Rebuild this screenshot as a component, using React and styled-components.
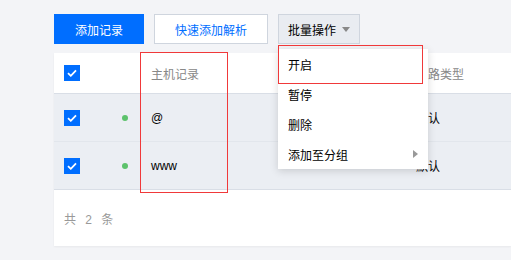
import styled, { createGlobalStyle } from "styled-components";

const GlobalStyle = createGlobalStyle`
  html, body {
    margin: 0;
    background: #f3f4f7;
    overflow: hidden;
  }
  body {
    font-family: "Liberation Sans", "Noto Sans CJK SC", sans-serif;
    font-size: 12px;
  }
`;

const Page = styled.div`
  position: relative;
  padding: 14px 0 0 54px;
  width: 511px;
  height: 260px;
  box-sizing: border-box;
  overflow: hidden;
`;

const Toolbar = styled.div`
  display: flex;
  gap: 10px;
  height: 30px;
`;

const Button = styled.button`
  height: 30px;
  width: ${(p) => p.$w}px;
  box-sizing: border-box;
  padding: 0;
  font: inherit;
  font-size: 12px;
  display: flex;
  align-items: center;
  justify-content: center;
  gap: 6px;
  border: 1px solid ${(p) => (p.$kind === "primary" ? "#006eff" : "#cfd5de")};
  background: ${(p) =>
    p.$kind === "primary" ? "#006eff" : p.$kind === "gray" ? "#e9ecf1" : "#fff"};
  color: ${(p) =>
    p.$kind === "primary" ? "#fff" : p.$kind === "gray" ? "#000" : "#006eff"};
`;

const Caret = styled.span`
  width: 0;
  height: 0;
  border-left: 4px solid transparent;
  border-right: 4px solid transparent;
  border-top: 5px solid #888;
  margin-top: 1px;
`;

const Card = styled.div`
  margin-top: 9px;
  background: #fff;
  box-shadow: 0 1px 2px rgba(0, 0, 0, 0.05);
  overflow: hidden;
`;

const Row = styled.div`
  display: flex;
  align-items: center;
  height: ${(p) => (p.$head ? 40 : 47)}px;
  background: ${(p) => (p.$head ? "#fff" : "#ebeef3")};
  border-bottom: 1px solid ${(p) => (p.$last || p.$head ? "#d9dee6" : "#e2e6ec")};
  color: ${(p) => (p.$head ? "#888" : "#000")};
`;

const Cell = styled.div`
  width: ${(p) => p.$w}px;
  flex: none;
  box-sizing: border-box;
  padding-left: ${(p) => p.$pl || 0}px;
  display: flex;
  align-items: center;
  white-space: nowrap;
`;

const Check = styled.span`
  width: 16px;
  height: 16px;
  background: #006eff;
  display: flex;
  align-items: center;
  justify-content: center;
`;

const Dot = styled.span`
  width: 6px;
  height: 6px;
  border-radius: 50%;
  background: #5cc26b;
`;

const Footer = styled.div`
  height: 56px;
  display: flex;
  align-items: center;
  padding-left: 10px;
  color: #999;
  letter-spacing: 3px;
`;

const Menu = styled.ul`
  position: absolute;
  left: 278px;
  top: 49px;
  width: 150px;
  margin: 0;
  padding: 0;
  list-style: none;
  background: #fff;
  box-shadow: 0 2px 8px rgba(0, 0, 0, 0.15);
  z-index: 2;
`;

const MenuItem = styled.li`
  height: 30px;
  display: flex;
  align-items: center;
  justify-content: space-between;
  padding: 0 10px;
  color: #000;
`;

const SubArrow = styled.span`
  width: 0;
  height: 0;
  border-top: 4px solid transparent;
  border-bottom: 4px solid transparent;
  border-left: 5px solid #999;
`;

const Mark = styled.div`
  position: absolute;
  left: ${(p) => p.$x}px;
  top: ${(p) => p.$y}px;
  width: ${(p) => p.$w}px;
  height: ${(p) => p.$h}px;
  border: 1px solid #f0393a;
  box-sizing: border-box;
  z-index: 3;
  pointer-events: none;
`;

const CheckBox = () => (
  <Check>
    <svg width="10" height="8" viewBox="0 0 10 8">
      <path d="M1 4.2 L3.8 6.8 L9 1.4" fill="none" stroke="#fff" strokeWidth="1.8" />
    </svg>
  </Check>
);

// checkbox, status, host, (covered by the menu), line
const cols = [
  { w: 56, pl: 10 },
  { w: 30, pl: 12 },
  { w: 88, pl: 11 },
  { w: 188, pl: 0 },
  { w: 95, pl: 0 },
];

const records = [
  { host: "@", line: "默认" },
  { host: "www", line: "默认" },
];

export default function App() {
  return (
    <>
      <GlobalStyle />
      <Page>
        <Toolbar>
          <Button $kind="primary" $w={90}>添加记录</Button>
          <Button $w={114}>快速添加解析</Button>
          <Button $kind="gray" $w={82}>
            批量操作 <Caret />
          </Button>
        </Toolbar>
        <Card>
          <Row $head>
            <Cell $w={cols[0].w} $pl={cols[0].pl}>
              <CheckBox />
            </Cell>
            <Cell $w={cols[1].w} $pl={cols[1].pl} />
            <Cell $w={cols[2].w} $pl={cols[2].pl}>主机记录</Cell>
            <Cell $w={cols[3].w} $pl={cols[3].pl} />
            <Cell $w={cols[4].w} $pl={cols[4].pl}>线路类型</Cell>
          </Row>
          {records.map((r, i) => (
            <Row key={r.host} $last={i === records.length - 1}>
              <Cell $w={cols[0].w} $pl={cols[0].pl}>
                <CheckBox />
              </Cell>
              <Cell $w={cols[1].w} $pl={cols[1].pl}>
                <Dot />
              </Cell>
              <Cell $w={cols[2].w} $pl={cols[2].pl}>{r.host}</Cell>
              <Cell $w={cols[3].w} $pl={cols[3].pl} />
              <Cell $w={cols[4].w} $pl={cols[4].pl}>{r.line}</Cell>
            </Row>
          ))}
          <Footer>共 2 条</Footer>
        </Card>
        <Menu>
          <MenuItem>开启</MenuItem>
          <MenuItem>暂停</MenuItem>
          <MenuItem>删除</MenuItem>
          <MenuItem>
            添加至分组 <SubArrow />
          </MenuItem>
        </Menu>
        <Mark $x={140} $y={52} $w={88} $h={141} />
        <Mark $x={278} $y={45} $w={145} $h={39} />
      </Page>
    </>
  );
}
